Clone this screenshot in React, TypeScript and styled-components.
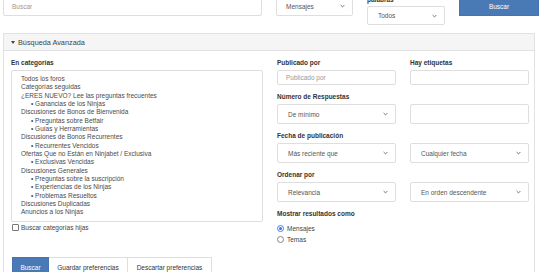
import React from "react";
import styled, { createGlobalStyle } from "styled-components";

const Global = createGlobalStyle`
  html, body { margin: 0; padding: 0; background: #fff; overflow: hidden; }
  body { font-family: "Liberation Sans", Arial, Helvetica, sans-serif; color: #333; }
  * { box-sizing: border-box; }
`;

const Page = styled.div`
  margin-top: -4px;
  padding: 0 1px 0 3px;
  width: 540px;
  height: 276px;
  overflow: hidden;
`;

const TopRow = styled.div`
  display: grid;
  grid-template-columns: 259px 77px 78px 80px;
  column-gap: 14px;
  align-items: start;
`;

const Field = styled.div<{ $h?: number }>`
  height: ${(p) => p.$h ?? 20}px;
  border: 1px solid #dedede;
  border-radius: 2px;
  background: #fff;
  display: flex;
  align-items: center;
  padding: 0 0 0 8px;
  font-size: 6.5px;
  color: #999;
`;

const SelectBox = styled.div<{ $h?: number; $pad?: number }>`
  height: ${(p) => p.$h ?? 20}px;
  border: 1px solid #dedede;
  border-radius: 2px;
  background: #fff;
  display: flex;
  align-items: center;
  justify-content: space-between;
  padding: 0 7px 0 ${(p) => p.$pad ?? 10}px;
  font-size: 6.5px;
  color: #555;
`;

const StackedField = styled.div`
  display: flex;
  flex-direction: column;
  gap: 2px;
`;

const SmallLabel = styled.div`
  font-size: 6.5px;
  line-height: 8px;
  font-weight: bold;
  color: #333;
`;

const PrimaryButton = styled.div<{ $h?: number; $w?: number }>`
  height: ${(p) => p.$h ?? 20}px;
  ${(p) => (p.$w ? `width: ${p.$w}px;` : "")}
  background: #4a7ab6;
  color: #fff;
  font-size: 6.5px;
  display: flex;
  align-items: center;
  justify-content: center;
  border: 1px solid #4574b0;
`;

const Panel = styled.div`
  margin-top: 8px;
  width: 532px;
  border: 1px solid #e2e2e2;
  border-bottom: none;
  height: 250px;
`;

const PanelHeader = styled.div`
  height: 17px;
  background: #f5f5f5;
  border-bottom: 1px solid #e2e2e2;
  display: flex;
  align-items: center;
  padding-left: 7px;
  gap: 2px;
  font-size: 7.3px;
  color: #444;
`;

const Caret = styled.span`
  width: 0;
  height: 0;
  border-left: 2px solid transparent;
  border-right: 2px solid transparent;
  border-top: 3px solid #444;
  margin-right: 1px;
`;

const PanelBody = styled.div`
  display: grid;
  grid-template-columns: 252px 252px;
  column-gap: 14px;
  padding: 8px 4px 0 7px;
`;

const Column = styled.div`
  display: flex;
  flex-direction: column;
`;

const ListBox = styled.div`
  margin-top: 3px;
  height: 152px;
  border: 1px solid #dedede;
  border-radius: 2px;
  padding: 4px 0 0 9px;
  overflow: hidden;
`;

const ListItem = styled.div<{ $sub?: boolean }>`
  font-size: 6.5px;
  line-height: 8.33px;
  color: #4a4a4a;
  white-space: nowrap;
  padding-left: ${(p) => (p.$sub ? 10 : 0)}px;
`;

const CheckRow = styled.label`
  display: flex;
  align-items: center;
  gap: 2px;
  margin-top: 2px;
  font-size: 6.5px;
  color: #444;
`;

const CheckBox = styled.span`
  width: 7px;
  height: 7px;
  border: 1px solid #777;
  border-radius: 1px;
  background: #fff;
  margin-left: 1px;
`;

const ButtonRow = styled.div`
  display: flex;
  margin-top: 26px;
  margin-left: 1px;
`;

const GhostButton = styled.div<{ $w: number }>`
  width: ${(p) => p.$w}px;
  height: 20px;
  border: 1px solid #dedede;
  border-left: none;
  background: #fff;
  color: #333;
  font-size: 6.5px;
  display: flex;
  align-items: center;
  justify-content: center;
`;

const FieldGroup = styled.div`
  display: flex;
  flex-direction: column;
  gap: 3px;
  margin-bottom: 8px;
`;

const Pair = styled.div`
  display: grid;
  grid-template-columns: 119px 119px;
  column-gap: 14px;
`;

const RadioList = styled.div`
  display: flex;
  flex-direction: column;
  gap: 4px;
  margin-top: 7px;
`;

const RadioRow = styled.div`
  display: flex;
  align-items: center;
  gap: 3px;
  font-size: 6.5px;
  color: #444;
`;

const Radio = styled.span<{ $on?: boolean }>`
  width: 7px;
  height: 7px;
  border-radius: 50%;
  border: 1px solid ${(p) => (p.$on ? "#3b82f6" : "#888")};
  background: #fff;
  display: flex;
  align-items: center;
  justify-content: center;
  &::after {
    content: "";
    width: 3px;
    height: 3px;
    border-radius: 50%;
    background: ${(p) => (p.$on ? "#2f74e8" : "transparent")};
  }
`;

const Chevron = () => (
  <svg width="5" height="4" viewBox="0 0 5 4">
    <path d="M0.6 1 L2.5 2.9 L4.4 1" fill="none" stroke="#666" strokeWidth="0.9" />
  </svg>
);

const Select = ({ text, h, pad }: { text: string; h?: number; pad?: number }) => (
  <SelectBox $h={h} $pad={pad}>
    <span>{text}</span>
    <Chevron />
  </SelectBox>
);

const categories: { t: string; sub?: boolean }[] = [
  { t: "Todos los foros" },
  { t: "Categorías seguidas" },
  { t: "¿ERES NUEVO? Lee las preguntas frecuentes" },
  { t: "• Ganancias de los Ninjas", sub: true },
  { t: "Discusiones de Bonos de Bienvenida" },
  { t: "• Preguntas sobre Betfair", sub: true },
  { t: "• Guías y Herramientas", sub: true },
  { t: "Discusiones de Bonos Recurrentes" },
  { t: "• Recurrentes Vencidos", sub: true },
  { t: "Ofertas Que no Están en Ninjabet / Exclusiva" },
  { t: "• Exclusivas Vencidas", sub: true },
  { t: "Discusiones Generales" },
  { t: "• Preguntas sobre la suscripción", sub: true },
  { t: "• Experiencias de los Ninjas", sub: true },
  { t: "• Problemas Resueltos", sub: true },
  { t: "Discusiones Duplicadas" },
  { t: "Anuncios a los Ninjas" },
];

export default function App() {
  return (
    <>
      <Global />
      <Page>
        <TopRow>
          <Field>Buscar</Field>
          <Select text="Mensajes" pad={9} />
          <StackedField>
            <SmallLabel>palabras</SmallLabel>
            <Select text="Todos" h={19} />
          </StackedField>
          <PrimaryButton>Buscar</PrimaryButton>
        </TopRow>
        <Panel>
          <PanelHeader>
            <Caret />
            Búsqueda Avanzada
          </PanelHeader>
          <PanelBody>
            <Column>
              <SmallLabel>En categorías</SmallLabel>
              <ListBox>
                {categories.map((c) => (
                  <ListItem key={c.t} $sub={c.sub}>
                    {c.t}
                  </ListItem>
                ))}
              </ListBox>
              <CheckRow>
                <CheckBox />
                Buscar categorías hijas
              </CheckRow>
              <ButtonRow>
                <PrimaryButton $w={37}>Buscar</PrimaryButton>
                <GhostButton $w={79}>Guardar preferencias</GhostButton>
                <GhostButton $w={84}>Descartar preferencias</GhostButton>
              </ButtonRow>
            </Column>
            <Column>
              <Pair>
                <FieldGroup>
                  <SmallLabel>Publicado por</SmallLabel>
                  <Field $h={15}>Publicado por</Field>
                </FieldGroup>
                <FieldGroup>
                  <SmallLabel>Hay etiquetas</SmallLabel>
                  <Field $h={15} />
                </FieldGroup>
              </Pair>
              <FieldGroup>
                <SmallLabel>Número de Respuestas</SmallLabel>
                <Pair>
                  <Select text="De mínimo" />
                  <Field />
                </Pair>
              </FieldGroup>
              <FieldGroup>
                <SmallLabel>Fecha de publicación</SmallLabel>
                <Pair>
                  <Select text="Más reciente que" />
                  <Select text="Cualquier fecha" />
                </Pair>
              </FieldGroup>
              <FieldGroup>
                <SmallLabel>Ordenar por</SmallLabel>
                <Pair>
                  <Select text="Relevancia" />
                  <Select text="En orden descendente" />
                </Pair>
              </FieldGroup>
              <SmallLabel>Mostrar resultados como</SmallLabel>
              <RadioList>
                <RadioRow>
                  <Radio $on />
                  Mensajes
                </RadioRow>
                <RadioRow>
                  <Radio />
                  Temas
                </RadioRow>
              </RadioList>
            </Column>
          </PanelBody>
        </Panel>
      </Page>
    </>
  );
}
